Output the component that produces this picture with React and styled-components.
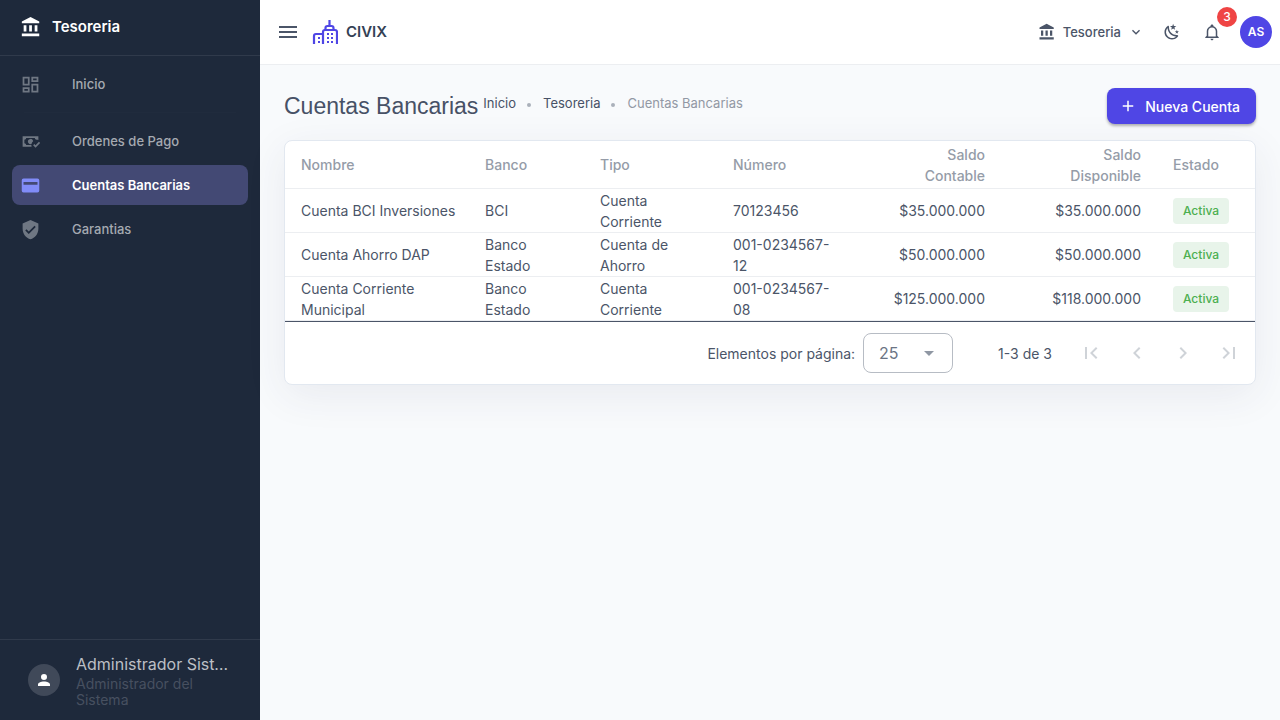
import React from "react";
import styled, { createGlobalStyle } from "styled-components";

const GlobalStyle = createGlobalStyle`
  *, *::before, *::after { box-sizing: border-box; }
  body {
    margin: 0;
    background: #f8fafc;
    color: #4b5568;
    font-family: Inter, "Liberation Sans", sans-serif;
    font-size: 14px;
  }
  button, select { font: inherit; color: inherit; }
  a { color: inherit; text-decoration: none; }
`;

const paths = {
  bank: "M11.5,1L2,6V8H21V6M16,10V17H19V10M2,22H21V19H2M10,10V17H13V10M4,10V17H7V10H4Z",
  dashboard:
    "M19,5V7H15V5H19M9,5V11H5V5H9M19,13V19H15V13H19M9,17V19H5V17H9M21,3H13V9H21V3M11,3H3V13H11V3M21,11H13V21H21V11M11,15H3V21H11V15Z",
  cashCheck:
    "M3 6V18H13.32C13.1 17.33 13 16.66 13 16H7C7 14.9 6.11 14 5 14V10C6.11 10 7 9.11 7 8H17C17 9.11 17.9 10 19 10V10.06C19.67 10.06 20.34 10.18 21 10.4V6H3M12 9C10.3 9.03 9 10.3 9 12C9 13.7 10.3 14.94 12 15C12.38 15 12.77 14.92 13.14 14.77C13.41 13.67 13.86 12.63 14.97 11.61C14.85 10.28 13.59 8.97 12 9M21.63 12.27L17.76 16.17L16.41 14.8L15 16.22L17.75 19L23.03 13.68L21.63 12.27Z",
  card: "M20 4H4A2 2 0 0 0 2 6V18A2 2 0 0 0 4 20H20A2 2 0 0 0 22 18V6A2 2 0 0 0 20 4M20 11H4V8H20Z",
  shield:
    "M10,17L6,13L7.41,11.59L10,14.17L16.59,7.58L18,9M12,1L3,5V11C3,16.55 6.84,21.74 12,23C17.16,21.74 21,16.55 21,11V5L12,1Z",
  account:
    "M12,4A4,4 0 0,1 16,8A4,4 0 0,1 12,12A4,4 0 0,1 8,8A4,4 0 0,1 12,4M12,14C16.42,14 20,15.79 20,18V20H4V18C4,15.79 7.58,14 12,14Z",
  menu: "M3,6H21V8H3V6M3,11H21V13H3V11M3,16H21V18H3V16Z",
  chevronDown: "M7.41,8.58L12,13.17L16.59,8.58L18,10L12,16L6,10L7.41,8.58Z",
  night:
    "M17.75,4.09L15.22,6.03L16.13,9.09L13.5,7.28L10.87,9.09L11.78,6.03L9.25,4.09L12.44,4L13.5,1L14.56,4L17.75,4.09M21.25,11L19.61,12.25L20.2,14.23L18.5,13.06L16.8,14.23L17.39,12.25L15.75,11L17.81,10.95L18.5,9L19.19,10.95L21.25,11M18.97,15.95C19.8,15.87 20.69,17.05 20.16,17.8C19.84,18.25 19.5,18.67 19.08,19.07C15.17,23 8.84,23 4.94,19.07C1.03,15.17 1.03,8.83 4.94,4.93C5.34,4.53 5.76,4.17 6.21,3.85C6.96,3.32 8.14,4.21 8.06,5.04C7.79,7.9 8.75,10.87 10.95,13.06C13.14,15.26 16.1,16.22 18.97,15.95M17.33,17.97C14.5,17.81 11.7,16.64 9.53,14.5C7.36,12.31 6.2,9.5 6.04,6.68C3.23,9.82 3.34,14.64 6.35,17.66C9.37,20.67 14.19,20.78 17.33,17.97Z",
  bell: "M10 21H14C14 22.1 13.1 23 12 23S10 22.1 10 21M21 19V20H3V19L5 17V11C5 7.9 7.03 5.17 10 4.29C10 4.19 10 4.1 10 4C10 2.9 10.9 2 12 2S14 2.9 14 4C14 4.1 14 4.19 14 4.29C16.97 5.17 19 7.9 19 11V17L21 19M17 11C17 8.24 14.76 6 12 6S7 8.24 7 11V18H17V11Z",
  plus: "M19,13H13V19H11V13H5V11H11V5H13V11H19V13Z",
  menuDown: "M7,10L12,15L17,10H7Z",
  first: "M18.41,16.59L13.82,12L18.41,7.41L17,6L11,12L17,18L18.41,16.59M6,6H8V18H6V6Z",
  previous: "M15.41,16.58L10.83,12L15.41,7.41L14,6L8,12L14,18L15.41,16.58Z",
  next: "M8.59,16.58L13.17,12L8.59,7.41L10,6L16,12L10,18L8.59,16.58Z",
  last: "M5.59,7.41L10.18,12L5.59,16.59L7,18L13,12L7,6L5.59,7.41M16,6H18V18H16V6Z",
};

const Svg = styled.svg`
  display: block;
  flex: none;
  width: ${(p) => p.$size}px;
  height: ${(p) => p.$size}px;
  fill: currentColor;
`;

const Icon = ({ name, size = 24 }) => (
  <Svg $size={size} viewBox="0 0 24 24" aria-hidden="true">
    <path d={paths[name]} />
  </Svg>
);

const Logo = () => (
  <Svg $size={26} viewBox="0 0 26 26" aria-hidden="true">
    <g fill="none" stroke="currentColor" strokeWidth="2.2">
      <path d="M2 25V17Q2 15 4 15H11" />
      <path d="M11 25V13Q11 11 13 11H23Q25 11 25 13V25" />
      <path d="M13.5 11V9Q13.5 7 15.500 7H19.500Q21.500 7 21.500 9V11M17.500 7V1" />
    </g>
    <path d="M6 18h2v2H6zM6 22h2v2H6zM15 14h2v2h-2zM19 14h2v2h-2zM15 18h2v2h-2zM19 18h2v2h-2zM15 22h2v2h-2zM19 22h2v2h-2z" />
  </Svg>
);

const Shell = styled.div`
  display: flex;
  min-height: 100vh;
`;

const Sidebar = styled.aside`
  display: flex;
  flex-direction: column;
  flex: none;
  width: 260px;
  background: #1e293b;
  color: #fff;
`;

const SidebarHeader = styled.div`
  display: flex;
  align-items: center;
  gap: 10px;
  height: 56px;
  padding: 0 20px 2px;
  border-bottom: 1px solid #303a4b;
  font-size: 15px;
  font-weight: 600;
`;

const Nav = styled.nav`
  display: flex;
  flex: 1;
  flex-direction: column;
  gap: 4px;
  padding: 8px 12px;
`;

const NavDivider = styled.hr`
  width: 212px;
  margin: 4px auto;
  border: 0;
  border-top: 1px solid #202b3d;
`;

const NavLink = styled.a`
  display: flex;
  align-items: center;
  gap: 31px;
  height: 40px;
  padding: 0 8px;
  border-radius: 8px;
  background: ${(p) => (p.$active ? "#434974" : "transparent")};
  color: ${(p) => (p.$active ? "#fff" : "#a5a9b1")};
  font-size: 13px;
  font-weight: ${(p) => (p.$active ? 600 : 500)};

  svg {
    color: ${(p) => (p.$active ? "#818cf8" : "#6f7783")};
  }
`;

const UserPanel = styled.div`
  display: flex;
  align-items: center;
  gap: 16px;
  height: 81px;
  padding: 0 28px;
  border-top: 1px solid #303a4b;
`;

const UserAvatar = styled.div`
  display: grid;
  place-items: center;
  flex: none;
  width: 32px;
  height: 32px;
  border-radius: 50%;
  background: #404959;
`;

const UserText = styled.div`
  min-width: 0;
`;

const UserName = styled.div`
  overflow: hidden;
  color: #bcbfc5;
  font-size: 16px;
  line-height: 24px;
  text-overflow: ellipsis;
  white-space: nowrap;
`;

const UserRole = styled.div`
  color: #475060;
  font-size: 14px;
  line-height: 16px;
`;

const Content = styled.div`
  flex: 1;
  min-width: 0;
`;

const Topbar = styled.header`
  display: flex;
  align-items: center;
  height: 65px;
  padding: 0 8px 1px 16px;
  border-bottom: 1px solid #eceef1;
  background: #fff;
`;

const PlainButton = styled.button`
  display: flex;
  align-items: center;
  justify-content: center;
  padding: 0;
  border: 0;
  background: none;
  cursor: pointer;
`;

const Brand = styled.a`
  display: flex;
  align-items: center;
  gap: 8px;
  margin: 0 auto 0 12px;
  color: #334155;
  font-size: 15px;
  font-weight: 600;

  svg {
    color: #4f46e5;
  }
`;

const ModuleButton = styled(PlainButton)`
  gap: 7px;
  height: 36px;
  margin-right: 8px;
  font-size: 13px;
  font-weight: 500;
`;

const ActionButton = styled(PlainButton)`
  position: relative;
  width: 40px;
  height: 40px;
`;

const Badge = styled.span`
  position: absolute;
  top: -5px;
  right: -5px;
  width: 20px;
  height: 20px;
  border-radius: 50%;
  background: #ef4444;
  color: #fff;
  font-size: 12px;
  font-weight: 500;
  line-height: 20px;
  text-align: center;
`;

const ProfileButton = styled(PlainButton)`
  width: 32px;
  height: 32px;
  margin-left: 8px;
  border-radius: 50%;
  background: #4f46e5;
  color: #fff;
  font-size: 12px;
  font-weight: 600;
`;

const Main = styled.main`
  padding: 23px 24px;
`;

const PageHeader = styled.div`
  display: flex;
  align-items: center;
  height: 36px;
  margin-bottom: 16px;
`;

const PageTitle = styled.h1`
  margin: 0 5px 0 0;
  color: #475166;
  font-family: "Liberation Sans", Arial, sans-serif;
  font-size: 23px;
  font-weight: 400;
  line-height: 32px;
`;

const Breadcrumbs = styled.ol`
  display: flex;
  flex: 1;
  align-items: center;
  margin: 0;
  padding: 0 0 6px;
  color: #475166;
  font-size: 13px;
  line-height: 20px;
  list-style: none;
`;

const Crumb = styled.li`
  display: flex;
  align-items: center;
  color: ${(p) => (p.$current ? "#9298a4" : "inherit")};

  &:not(:first-child)::before {
    width: 4px;
    height: 4px;
    margin: 4px 12px 0 11px;
    border-radius: 50%;
    background: #aab0ba;
    content: "";
  }
`;

const PrimaryButton = styled(PlainButton)`
  gap: 8px;
  height: 36px;
  padding: 0 16px 0 12px;
  border-radius: 8px;
  background: #4f46e5;
  box-shadow: 0 2px 3px rgba(0, 0, 0, 0.3);
  color: #fff;
  font-size: 14px;
  font-weight: 500;
`;

const Card = styled.section`
  border: 1px solid #e2e8f0;
  border-radius: 8px;
  background: #fff;
  box-shadow: 0 10px 40px rgba(51, 48, 90, 0.08);
`;

const Table = styled.table`
  width: 100%;
  border-spacing: 0;
  table-layout: fixed;
  line-height: 21px;
`;

const Column = styled.col`
  width: ${(p) => p.$width}px;
`;

const HeadCell = styled.th`
  height: 48px;
  padding: ${(p) => (p.$numeric ? "2px 16px 2px 36px" : "2px 12px 2px 16px")};
  border-bottom: 1px solid #eceef1;
  color: #959ca8;
  font-weight: 500;
  text-align: ${(p) => (p.$numeric ? "right" : "left")};
`;

const Cell = styled.td`
  height: 44px;
  padding: ${(p) => (p.$numeric ? "0 16px" : "0 12px 0 16px")};
  border-bottom: 1px solid #eceef1;
  text-align: ${(p) => (p.$numeric ? "right" : "left")};
`;

const Status = styled.span`
  display: block;
  width: 56px;
  height: 26px;
  border-radius: 4px;
  background: #e8f4ea;
  color: #4caf50;
  font-size: 12px;
  font-weight: 500;
  line-height: 26px;
  text-align: center;
`;

const TableFooter = styled.div`
  display: flex;
  align-items: center;
  justify-content: flex-end;
  height: 63px;
  padding: 0 3px 0 16px;
  border-top: 1px solid #4b5568;
`;

const SelectBox = styled.div`
  position: relative;
  display: flex;
  align-items: center;
  margin: 0 45px 0 8px;
  color: #6b7484;

  svg {
    position: absolute;
    right: 12px;
    color: #8f97a3;
    pointer-events: none;
  }
`;

const PageSize = styled.select`
  width: 90px;
  height: 40px;
  padding: 0 15px;
  border: 1px solid #b7bcc4;
  border-radius: 8px;
  appearance: none;
  background: #fff;
  font-size: 16px;
`;

const Pager = styled.div`
  display: flex;
  margin-left: 16px;
`;

const PageButton = styled(PlainButton)`
  width: 46px;
  height: 40px;
  color: #cfd3d8;
`;

const links = [
  { label: "Ordenes de Pago", icon: "cashCheck" },
  { label: "Cuentas Bancarias", icon: "card", active: true },
  { label: "Garantias", icon: "shield" },
];

const columns = [
  { label: "Nombre", width: 184 },
  { label: "Banco", width: 115 },
  { label: "Tipo", width: 133 },
  { label: "Número", width: 133 },
  { label: "Saldo Contable", width: 151, numeric: true },
  { label: "Saldo Disponible", width: 156, numeric: true },
  { label: "Estado", width: 98 },
];

const accounts = [
  ["Cuenta BCI Inversiones", "BCI", "Cuenta Corriente", "70123456", "$35.000.000", "$35.000.000"],
  ["Cuenta Ahorro DAP", "Banco Estado", "Cuenta de Ahorro", "001-0234567-12", "$50.000.000", "$50.000.000"],
  ["Cuenta Corriente Municipal", "Banco Estado", "Cuenta Corriente", "001-0234567-08", "$125.000.000", "$118.000.000"],
];

const pagerButtons = [
  ["first", "Primera página"],
  ["previous", "Página anterior"],
  ["next", "Página siguiente"],
  ["last", "Última página"],
];

export default function App() {
  return (
    <>
      <GlobalStyle />
      <Shell>
        <Sidebar>
          <SidebarHeader>
            <Icon name="bank" size={22} />
            Tesoreria
          </SidebarHeader>
          <Nav>
            <NavLink href="#inicio">
              <Icon name="dashboard" size={21} />
              Inicio
            </NavLink>
            <NavDivider />
            {links.map((link) => (
              <NavLink
                key={link.label}
                href="#modulo"
                $active={link.active}
                aria-current={link.active ? "page" : undefined}
              >
                <Icon name={link.icon} size={21} />
                {link.label}
              </NavLink>
            ))}
          </Nav>
          <UserPanel>
            <UserAvatar>
              <Icon name="account" size={18} />
            </UserAvatar>
            <UserText>
              <UserName>Administrador Sistema</UserName>
              <UserRole>Administrador del Sistema</UserRole>
            </UserText>
          </UserPanel>
        </Sidebar>
        <Content>
          <Topbar>
            <PlainButton aria-label="Menú">
              <Icon name="menu" />
            </PlainButton>
            <Brand href="#civix">
              <Logo />
              CIVIX
            </Brand>
            <ModuleButton>
              <Icon name="bank" size={18} />
              Tesoreria
              <Icon name="chevronDown" size={16} />
            </ModuleButton>
            <ActionButton aria-label="Modo oscuro">
              <Icon name="night" size={18} />
            </ActionButton>
            <ActionButton aria-label="Notificaciones">
              <Icon name="bell" size={18} />
              <Badge>3</Badge>
            </ActionButton>
            <ProfileButton>AS</ProfileButton>
          </Topbar>
          <Main>
            <PageHeader>
              <PageTitle>Cuentas Bancarias</PageTitle>
              <Breadcrumbs>
                <Crumb>
                  <a href="#inicio">Inicio</a>
                </Crumb>
                <Crumb>
                  <a href="#tesoreria">Tesoreria</a>
                </Crumb>
                <Crumb $current aria-current="page">
                  Cuentas Bancarias
                </Crumb>
              </Breadcrumbs>
              <PrimaryButton>
                <Icon name="plus" size={18} />
                Nueva Cuenta
              </PrimaryButton>
            </PageHeader>
            <Card>
              <Table>
                <colgroup>
                  {columns.map((c) => (
                    <Column key={c.label} $width={c.width} />
                  ))}
                </colgroup>
                <thead>
                  <tr>
                    {columns.map((c) => (
                      <HeadCell key={c.label} scope="col" $numeric={c.numeric}>
                        {c.label}
                      </HeadCell>
                    ))}
                  </tr>
                </thead>
                <tbody>
                  {accounts.map((row) => (
                    <tr key={row[0]}>
                      {row.map((value, i) => (
                        <Cell key={columns[i].label} $numeric={columns[i].numeric}>
                          {value}
                        </Cell>
                      ))}
                      <Cell>
                        <Status>Activa</Status>
                      </Cell>
                    </tr>
                  ))}
                </tbody>
              </Table>
              <TableFooter>
                <label htmlFor="page-size">Elementos por página:</label>
                <SelectBox>
                  <PageSize id="page-size" defaultValue="25">
                    <option>10</option>
                    <option>25</option>
                    <option>50</option>
                  </PageSize>
                  <Icon name="menuDown" />
                </SelectBox>
                <span>1-3 de 3</span>
                <Pager>
                  {pagerButtons.map(([icon, label]) => (
                    <PageButton key={icon} aria-label={label} disabled>
                      <Icon name={icon} />
                    </PageButton>
                  ))}
                </Pager>
              </TableFooter>
            </Card>
          </Main>
        </Content>
      </Shell>
    </>
  );
}
